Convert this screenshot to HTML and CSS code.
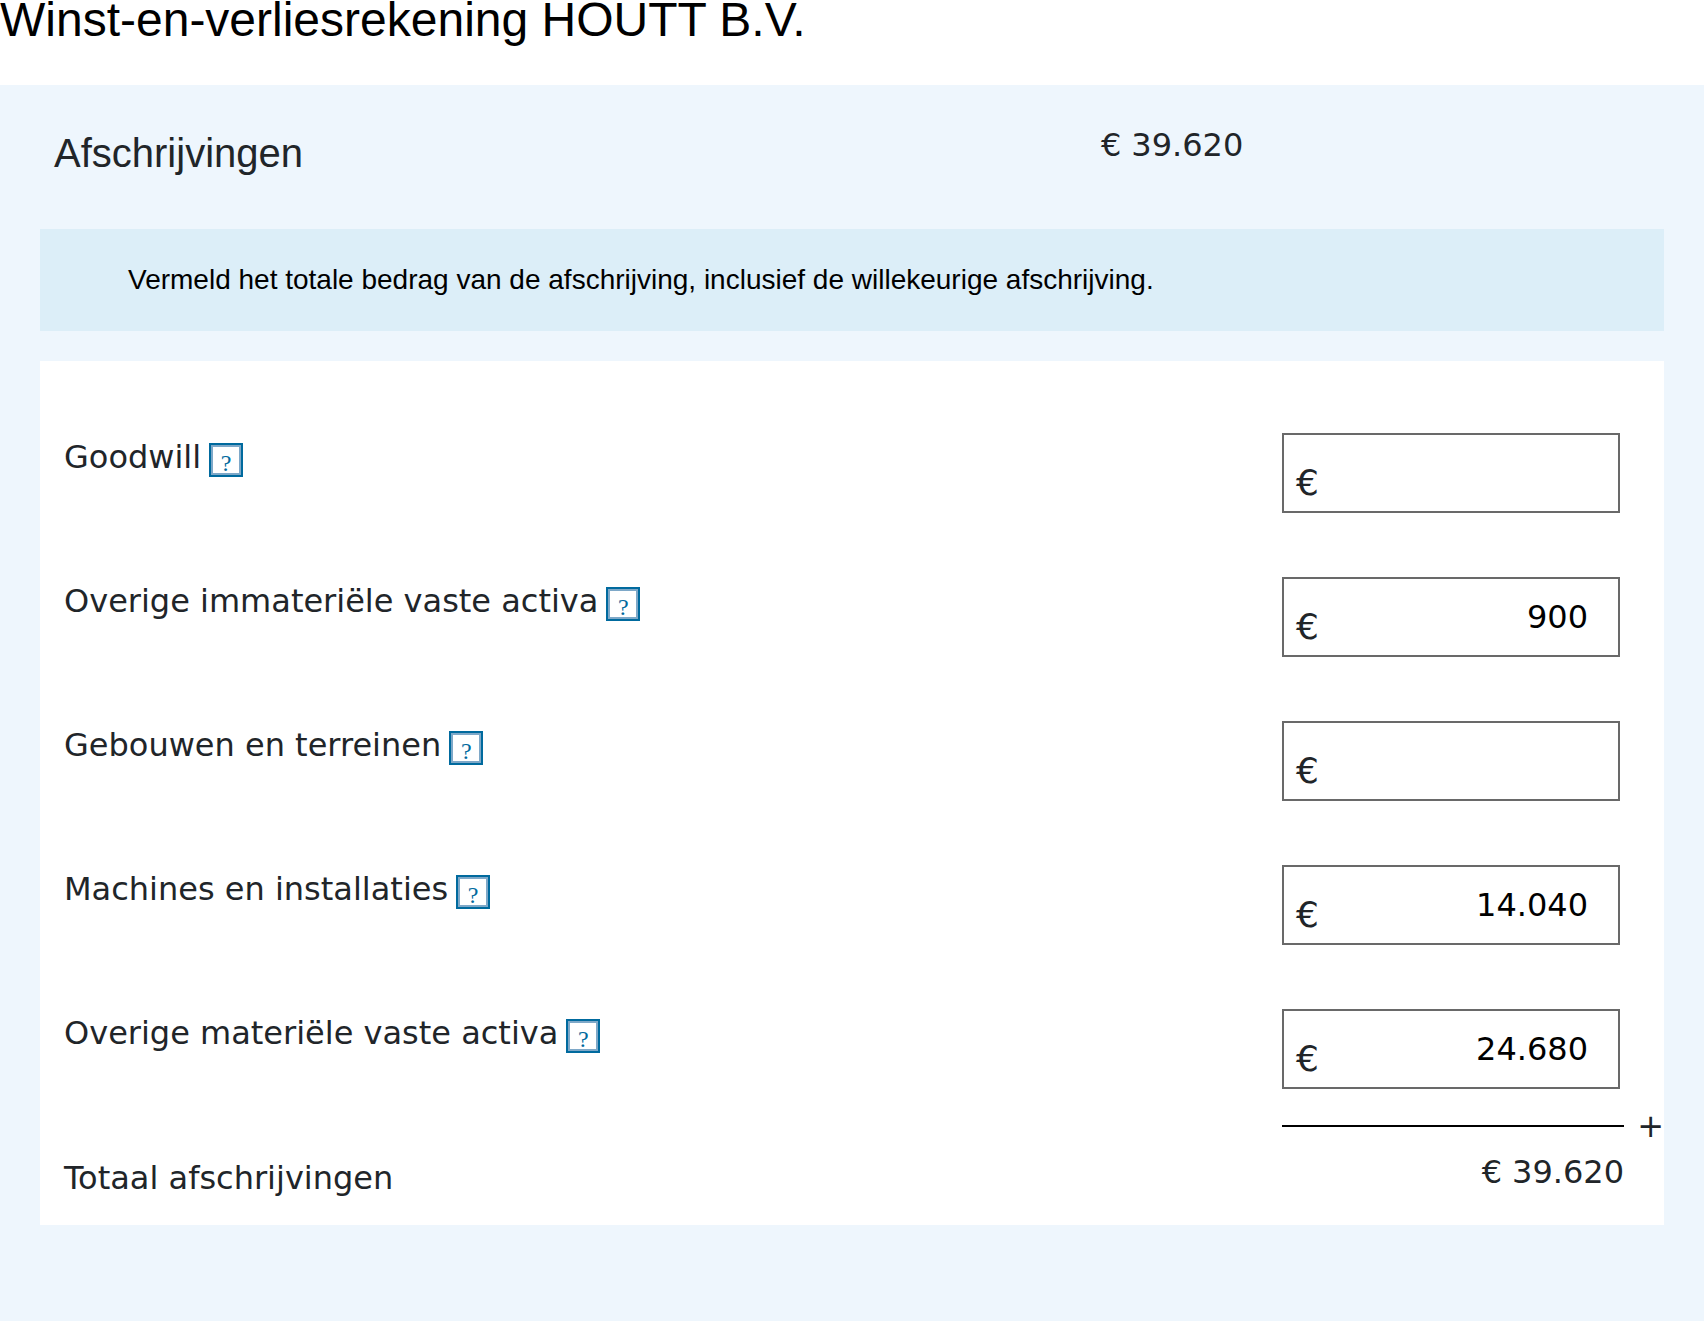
FILE: index.html
```
<!DOCTYPE html>
<html lang="nl">

<head>
  <meta charset="UTF-8">
  <meta name="viewport" content="width=device-width, initial-scale=1.0">
  <title>Winst-en-verliesrekening</title>
  <link rel="stylesheet" href="styles.css">
</head>

<body>
  <h1 class="title">Winst-en-verliesrekening HOUTT B.V.</h1>
  <main class="section">
    <div class="section-head">
      <h2 class="section-title">Afschrijvingen</h2>
      <div class="amount"><span>€</span><span>39.620</span></div>
    </div>
    <p class="info">Vermeld het totale bedrag van de afschrijving, inclusief de willekeurige afschrijving.</p>
    <form class="panel">
      <div class="row">
        <div class="name">
          <label for="goodwill">Goodwill</label>
          <button type="button" class="help" aria-label="Help bij Goodwill">?</button>
        </div>
        <div class="field">
          <span class="euro">€</span>
          <input type="text" id="goodwill" value="">
        </div>
      </div>
      <div class="row">
        <div class="name">
          <label for="immaterieel">Overige immateriële vaste activa</label>
          <button type="button" class="help" aria-label="Help bij Overige immateriële vaste activa">?</button>
        </div>
        <div class="field">
          <span class="euro">€</span>
          <input type="text" id="immaterieel" value="900">
        </div>
      </div>
      <div class="row">
        <div class="name">
          <label for="gebouwen">Gebouwen en terreinen</label>
          <button type="button" class="help" aria-label="Help bij Gebouwen en terreinen">?</button>
        </div>
        <div class="field">
          <span class="euro">€</span>
          <input type="text" id="gebouwen" value="">
        </div>
      </div>
      <div class="row">
        <div class="name">
          <label for="machines">Machines en installaties</label>
          <button type="button" class="help" aria-label="Help bij Machines en installaties">?</button>
        </div>
        <div class="field">
          <span class="euro">€</span>
          <input type="text" id="machines" value="14.040">
        </div>
      </div>
      <div class="row">
        <div class="name">
          <label for="materieel">Overige materiële vaste activa</label>
          <button type="button" class="help" aria-label="Help bij Overige materiële vaste activa">?</button>
        </div>
        <div class="field">
          <span class="euro">€</span>
          <input type="text" id="materieel" value="24.680">
        </div>
      </div>
      <div class="total">
        <div class="total-name">Totaal afschrijvingen</div>
        <div class="sum">
          <div class="sum-line"></div>
          <span class="plus">+</span>
          <div class="amount sum-amount"><span>€</span><span>39.620</span></div>
        </div>
      </div>
    </form>
  </main>
</body>

</html>
```
FILE: styles.css
```
* {
  box-sizing: border-box;
}

body {
  margin: 0;
  min-height: 100vh;
  display: flex;
  flex-direction: column;
  background-color: #fff;
  color: #212529;
  font-family: Verdana, "DejaVu Sans", sans-serif;
  font-size: 32px;
  line-height: 40px;
}

.title,
.section-title,
.info {
  margin: 0;
  font-family: Arial, "Liberation Sans", sans-serif;
  font-weight: normal;
}

.title {
  padding-bottom: 45px;
  color: #000;
  font-size: 48px;
}

.section {
  flex: 1;
  padding: 40px 40px 96px;
  background-color: #eef6fd;
}

.section-head {
  display: grid;
  grid-template-columns: 1fr 563px;
  height: 104px;
}

.section-title {
  padding: 8px 14px;
  font-size: 40px;
}

.amount {
  display: flex;
  gap: 10px;
}

.info {
  padding: 31px 88px;
  margin-bottom: 30px;
  background-color: #dceef8;
  color: #000;
  font-size: 28px;
}

.panel {
  padding-top: 40px;
  background-color: #fff;
}

.row,
.total {
  display: grid;
  grid-template-columns: 1fr 382px;
}

.row {
  padding: 32px 0;
}

.name {
  display: flex;
  align-items: flex-end;
  align-self: start;
  gap: 8px;
  padding: 4px 0 0 24px;
}

.help {
  width: 34px;
  height: 34px;
  padding: 6px 0 0;
  border: 2px solid #006a9e;
  box-shadow: inset 0 0 0 2px #7ea8c8;
  background-color: #fff;
  color: #006a9e;
  font-family: "Liberation Serif", serif;
  font-size: 24px;
  line-height: 24px;
}

.field {
  display: flex;
  width: 338px;
  height: 80px;
  border: 2px solid #696969;
}

.euro {
  align-self: flex-end;
  padding: 0 0 10px 12px;
  font-size: 36px;
  line-height: 36px;
}

.field input {
  flex: 1;
  min-width: 0;
  padding: 0 30px 0 0;
  border: 0;
  background: none;
  color: #000;
  font: inherit;
  text-align: right;
}

.total {
  height: 104px;
}

.total-name {
  padding: 37px 0 0 24px;
}

.sum {
  display: grid;
  grid-template-columns: 342px 1fr;
  grid-template-rows: 10px 1fr;
}

.sum-line {
  height: 2px;
  margin-top: 4px;
  background-color: #000;
}

.plus {
  align-self: center;
  justify-self: end;
  line-height: 10px;
}

.sum-amount {
  justify-content: flex-end;
  padding-top: 21px;
}
```
